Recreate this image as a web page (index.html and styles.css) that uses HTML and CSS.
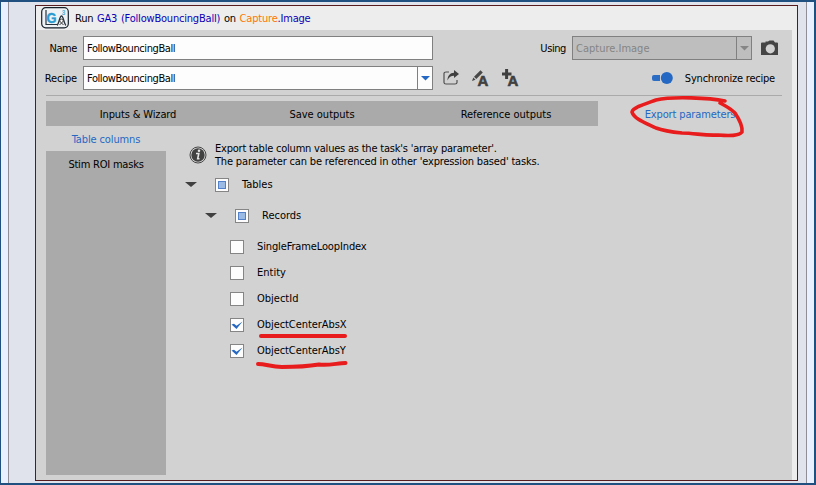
FILE: index.html
```html
<!DOCTYPE html>
<html lang="en">
<head>
<meta charset="utf-8">
<title>Run GA3</title>
<link rel="stylesheet" href="styles.css">
</head>
<body>
<div class="window">
  <div class="lane">
    <section class="task">
      <header class="task-head">
        <svg class="logo" width="28" height="22" viewBox="0 0 28 22">
          <rect x=".7" y=".7" width="26.6" height="20.1" rx="4" fill="#eef2f5" stroke="#15202b" stroke-width="1.2"/>
          <path d="M5 3v14.500h11" fill="none" stroke="#26333d" stroke-width="1.2"/>
          <text class="logo-g" x="5.500" y="15.500" textLength="10" lengthAdjust="spacingAndGlyphs">G</text>
          <path d="M16 18.300c2-1 2.500-9.300 4.500-9.300s2.500 8.300 4.500 9.300" fill="none" stroke="#26333d" stroke-width="1.3"/>
          <circle cx="20.500" cy="13.800" r="1.700" fill="#fff" stroke="#333" stroke-width=".9"/>
          <path d="M18.500 18l2-2 2 2" fill="none" stroke="#333"/>
          <text class="logo-3" x="20.800" y="8">3</text>
        </svg>
        <p class="title"><span>Run </span><span class="blue">GA3 (FollowBouncingBall)</span><span> on </span><span class="orange">Capture</span><span class="blue">.Image</span></p>
      </header>
      <div class="task-body">
        <div class="row">
          <span class="label tightest">Name</span>
          <div class="field"><span class="tightest">FollowBouncingBall</span></div>
          <span class="label using tightest">Using</span>
          <div class="field select disabled"><span>Capture.Image</span><i class="drop"><svg width="9" height="5"><path d="M0 0h9L4.500 4.500z" fill="#858585"/></svg></i></div>
          <svg class="camera" width="18" height="16" viewBox="0 0 18 16"><path d="M0 3.500Q0 2.500 1 2.500H4.500V1.500H7L8.500.5h4L14 2.500h2q1 0 1 1V15H0z" fill="#454545"/><circle cx="9.300" cy="8.800" r="4.600" fill="#d2d2d2"/></svg>
        </div>
        <div class="row">
          <span class="label snug">Recipe</span>
          <div class="field select recipe"><span class="tightest">FollowBouncingBall</span><i class="drop"><svg width="9" height="5"><path d="M0 0h9L4.500 4.500z" fill="#2468c4"/></svg></i></div>
          <div class="tools">
            <svg width="17" height="18" viewBox="0 0 17 18"><path d="M6 3H3Q1 3 1 4.500V13.500Q1 15 3 15h9q2 0 2-1.500v-2.500" fill="none" stroke="#505050" stroke-width="1.200"/><path d="M4.500 11.500C4.500 7 7 3.800 11 3.800V1l5 4-5 4V6.700C8 6.700 6 8 4.500 11.500z" fill="#404040"/></svg>
            <svg width="18" height="24" viewBox="0 -3 18 24"><path d="M0 12l1.300-3.400 2.200 2.100zM2 7.800L8.500 1.300l2.300 2.200-6.500 6.600z" fill="#484848"/><text class="tool-a" x="5.500" y="17">A</text></svg>
            <svg width="18" height="24" viewBox="0 -3 18 24"><path d="M3.100 0h3v3.500H9.500v3H6.100V10h-3V6.500H0v-3h3.100z" fill="#404040"/><text class="tool-a" x="5.500" y="17">A</text></svg>
          </div>
          <div class="sync"><svg width="21" height="12" viewBox="0 0 21 12"><path d="M8 3H2Q0 3 0 5v2q0 2 2 2h6z" fill="#2b6cc4"/><circle cx="14.800" cy="6" r="6" fill="#2468c4"/></svg><span class="tight">Synchronize recipe</span></div>
        </div>
        <nav class="tabs">
          <span class="tab"><b class="snug">Inputs &amp; Wizard</b></span>
          <span class="tab"><b>Save outputs</b></span>
          <span class="tab"><b>Reference outputs</b></span>
          <span class="tab active"><b class="snug">Export parameters</b></span>
        </nav>
        <div class="content">
          <aside class="side">
            <span class="side-tab active"><b class="snug">Table columns</b></span>
            <span class="side-tab"><b class="tight">Stim ROI masks</b></span>
          </aside>
          <main class="pane">
            <div class="info">
              <svg width="18" height="18" viewBox="0 0 18 18"><circle cx="9" cy="9" r="8" fill="#dcdcdc" stroke="#454545"/><circle cx="9" cy="9" r="6.700" fill="#414141"/><circle cx="10" cy="4.800" r="1.300" fill="#e4e4e4"/><path d="M7 7.500h2.800L8.700 12.800h1.800" fill="none" stroke="#e4e4e4" stroke-width="1.600"/></svg>
              <p><span class="tight">Export table column values as the task's 'array parameter'.</span><br><span class="wide-line">The parameter can be referenced in other 'expression based' tasks.</span></p>
            </div>
            <div class="node top"><i class="arrow"></i><i class="box partial"></i><span>Tables</span></div>
            <div class="node child"><i class="arrow"></i><i class="box partial"></i><span>Records</span></div>
            <div class="leaves">
              <div class="node leaf"><i class="box"></i><span class="snug">SingleFrameLoopIndex</span></div>
              <div class="node leaf"><i class="box"></i><span>Entity</span></div>
              <div class="node leaf"><i class="box"></i><span>ObjectId</span></div>
              <div class="node leaf"><i class="box"><svg width="12" height="12"><path d="M.5 5.500l2.500-.7 2.500 2L11.500 2.500 5.500 10z" fill="#2468c4"/></svg></i><span class="mild">ObjectCenterAbsX</span></div>
              <div class="node leaf"><i class="box"><svg width="12" height="12"><path d="M.5 5.500l2.500-.7 2.500 2L11.500 2.500 5.500 10z" fill="#2468c4"/></svg></i><span class="mild">ObjectCenterAbsY</span></div>
            </div>
          </main>
        </div>
      </div>
    </section>
  </div>
  <svg class="marks" width="816" height="485" viewBox="0 0 816 485">
    <path d="M725 101C710 98 673 96 656 100C648 103 633 107 632 112C634 119 646 123 656 128C664 131 672 132 682 133C695 133 705 136 718 135C730 136 739 136 742 132C743 126 739 119 735 113C731 109 726 106 720 103" stroke-width="3.600"/>
    <path d="M261 336H345" stroke-width="4"/>
    <path d="M258 364C266 364 271 367 282 367C295 367 310 366 319 364.500C328 366 338 363 345.500 363" stroke-width="4"/>
  </svg>
</div>
</body>
</html>
```
FILE: styles.css
```css
*, *::after { box-sizing: border-box; }
body { margin: 0; font: 11px/13px "DejaVu Sans Condensed", "DejaVu Sans", sans-serif; font-stretch: condensed; color: #000; }
p { margin: 0; }
b { font-weight: normal; }
span, b { white-space: nowrap; }
svg { display: block; flex: none; }
.mild { letter-spacing: -.06px; }
.snug { letter-spacing: -.13px; }
.tight { letter-spacing: -.21px; }
.wide-line { letter-spacing: -.17px; }
.tightest { letter-spacing: -.41px; }
.window { position: relative; width: 816px; height: 485px; border: solid #20507f; border-width: 2px 2px 2px 1px; background: #e9f0ff; padding: 0 7px; }
.lane { height: 100%; border: solid #8e8e94; border-width: 0 1px; background: #e0e2ec; padding: 3px 8px 2px 26px; }
.task { height: 476px; border: 1px solid #571b1e; background: #ededed; padding-right: 5px; }
.task-head { height: 24px; display: flex; align-items: center; padding-left: 5px; gap: 6px; }
.logo-g { font: bold 15px "Liberation Sans", sans-serif; fill: #2a9bd0; stroke: #2a9bd0; stroke-width: .4px; }
.logo-3 { font: bold 6.500px "Liberation Sans", sans-serif; fill: #55afd2; }
.tool-a { font: bold 15px "Liberation Sans", sans-serif; fill: #404040; stroke: #404040; stroke-width: .6px; }
.title { white-space: pre; letter-spacing: -.2px; word-spacing: .8px; }
.title span { white-space: pre; }
.blue { color: #0b00b5; }
.orange { color: #ff7800; }
.task-body { height: 450px; background: #d2d2d2; padding: 6px 10px 5px; }
.row { height: 24px; display: flex; align-items: center; margin-bottom: 6px; }
.label { flex: 0 0 37px; margin: 0 6px 0 -6px; display: flex; justify-content: flex-end; }
.field { width: 350px; height: 24px; border: 1px solid #808080; background: #fdfdfd; display: flex; align-items: center; padding-left: 3px; flex: none; }
.label.using { margin-left: 96px; }
.select { justify-content: space-between; }
.drop { width: 15px; height: 22px; border-left: 1px solid #808080; display: grid; place-items: center; }
.disabled { width: 180px; background: #bebebe; color: #858585; }
.camera { margin-left: 9px; }
.tools { display: flex; align-items: center; gap: 12px; margin-left: 10px; }
.sync { display: flex; align-items: center; gap: 12px; margin-left: auto; margin-right: 7px; }
.tabs { display: grid; grid-template-columns: repeat(4, 184px); height: 31px; border-top: 1px solid #aaa; padding-top: 5px; margin-top: -1px; }
.tab, .side-tab { background: #aaa; display: flex; align-items: center; justify-content: center; height: 25px; }
.tab b, .side-tab b { padding-top: 1px; }
.active { background: #d2d2d2; color: #2468c4; }
.content { display: flex; height: 349px; }
.side { width: 120px; background: #aaa; }
.pane { padding: 16px 0 0 20px; }
.info { display: flex; gap: 7px; align-items: center; height: 26px; padding-left: 3px; }
.info p { padding-left: 1px; }
.node { display: flex; align-items: center; height: 26px; }
.node.top { height: 31px; margin-top: 1px; }
.node.child { height: 31px; padding-left: 20px; }
.leaves { padding-top: 3px; }
.node.leaf { padding-left: 44px; }
.leaf span { padding-bottom: 2px; }
.arrow { border: solid transparent; border-width: 5.500px 6px 0; border-top-color: #404040; margin: 0 18px 0 -1px; }
.box { width: 14px; height: 14px; border: 1px solid #858585; background: #fdfdfd; margin-right: 13px; }
.partial::after { content: ""; display: block; width: 8px; height: 8px; margin: 2px; border: 1px solid #5482c8; background: #9bbbe5; }
.marks { position: absolute; left: -1px; top: -2px; fill: none; stroke: #e81c1c; stroke-linecap: round; stroke-linejoin: round; }
```
